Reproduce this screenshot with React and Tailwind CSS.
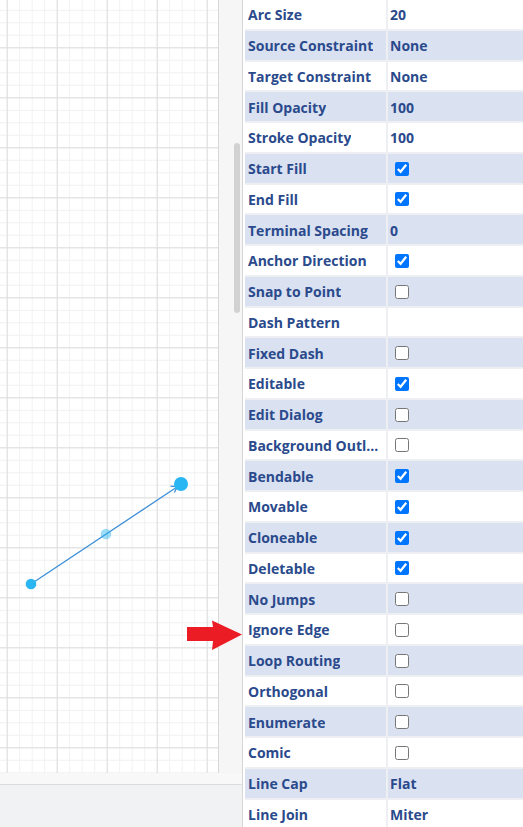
import React from 'react';

const rows = [
  ['Arc Size', '20'],
  ['Source Constraint', 'None'],
  ['Target Constraint', 'None'],
  ['Fill Opacity', '100'],
  ['Stroke Opacity', '100'],
  ['Start Fill', true],
  ['End Fill', true],
  ['Terminal Spacing', '0'],
  ['Anchor Direction', true],
  ['Snap to Point', false],
  ['Dash Pattern', ''],
  ['Fixed Dash', false],
  ['Editable', true],
  ['Edit Dialog', false],
  ['Background Outline', false],
  ['Bendable', true],
  ['Movable', true],
  ['Cloneable', true],
  ['Deletable', true],
  ['No Jumps', false],
  ['Ignore Edge', false],
  ['Loop Routing', false],
  ['Orthogonal', false],
  ['Enumerate', false],
  ['Comic', false],
  ['Line Cap', 'Flat'],
  ['Line Join', 'Miter'],
];

function Canvas() {
  return (
    <svg width="218" height="773" className="block">
      <defs>
        <pattern id="minor" width="12.5" height="12.5" x="6.7" y="47.3" patternUnits="userSpaceOnUse">
          <path d="M0 0.5H12.5M0.5 0V12.5" stroke="#f1f1f1" strokeWidth="1" fill="none" />
        </pattern>
        <pattern id="major" width="50" height="50" x="6.7" y="47.3" patternUnits="userSpaceOnUse">
          <path d="M0 0.5H50M0.5 0V50" stroke="#dedede" strokeWidth="1" fill="none" />
        </pattern>
      </defs>
      <rect width="218" height="773" fill="#ffffff" />
      <rect width="218" height="773" fill="url(#minor)" />
      <rect width="218" height="773" fill="url(#major)" />
      <line x1="31" y1="584" x2="177" y2="487" stroke="#3b8fd8" strokeWidth="1.3" />
      <path d="M170.5 486.2 L177.5 486.6 L174.3 492.5" stroke="#3b8fd8" strokeWidth="1.3" fill="none" />
      <circle cx="31" cy="584" r="5.3" fill="#29b6f2" />
      <circle cx="106" cy="534" r="5.3" fill="#29b6f2" opacity="0.45" />
      <circle cx="181" cy="484" r="7" fill="#29b6f2" />
    </svg>
  );
}

export default function App() {
  return (
    <div className="relative w-[523px] h-[827px] overflow-hidden flex bg-white" style={{ fontFamily: '"Open Sans", "Noto Sans", sans-serif' }}>
      <div className="w-[243px] h-full flex flex-col bg-[#f1f2f4] border-r border-[#d6d6d6]">
        <div className="flex h-[773px]">
          <div className="border-r border-[#d8d8d8]">
            <Canvas />
          </div>
          <div className="flex-1 bg-[#f6f6f6] pt-[143px] pl-[15px]">
            <div className="w-[6px] h-[170px] rounded-full bg-[#d2d2d2]"></div>
          </div>
        </div>
        <div className="h-[12px] bg-[#f8f8f8] border-b border-[#dcdcdc]"></div>
        <div className="flex-1 bg-[#f1f2f4]"></div>
      </div>

      <div className="flex-1 pl-[2px] bg-white">
        <div className="flex flex-col gap-[2px] bg-[#edeff3]">
          {rows.map(([label, value], i) => {
            const bg = i % 2 === 1 ? 'bg-[#dae1f1]' : 'bg-white';
            return (
              <div key={label} className="grid grid-cols-[141px_1fr] gap-[2px] h-[28.75px]">
                <div className={`${bg} flex items-center pl-[3px] pr-[4px] pt-[2px] min-w-0`}>
                  <span className="truncate text-[14px] font-bold text-[#2a4a8c] leading-[20px]">{label}</span>
                </div>
                <div className={`${bg} flex items-center pl-[2px]`}>
                  {typeof value === 'boolean' ? (
                    <input type="checkbox" defaultChecked={value} className="w-[14px] h-[14px] ml-[5px] mt-[1px]" />
                  ) : (
                    <span className="text-[14px] font-bold text-[#2a4a8c] leading-[20px] pt-[2px]">{value}</span>
                  )}
                </div>
              </div>
            );
          })}
        </div>
      </div>

      <svg width="58" height="32" className="absolute left-[186px] top-[619px]">
        <polygon points="1,8 27,8 26,1.5 56,15.5 26,31 27,22 1,22" fill="#ec1c24" />
      </svg>
    </div>
  );
}
